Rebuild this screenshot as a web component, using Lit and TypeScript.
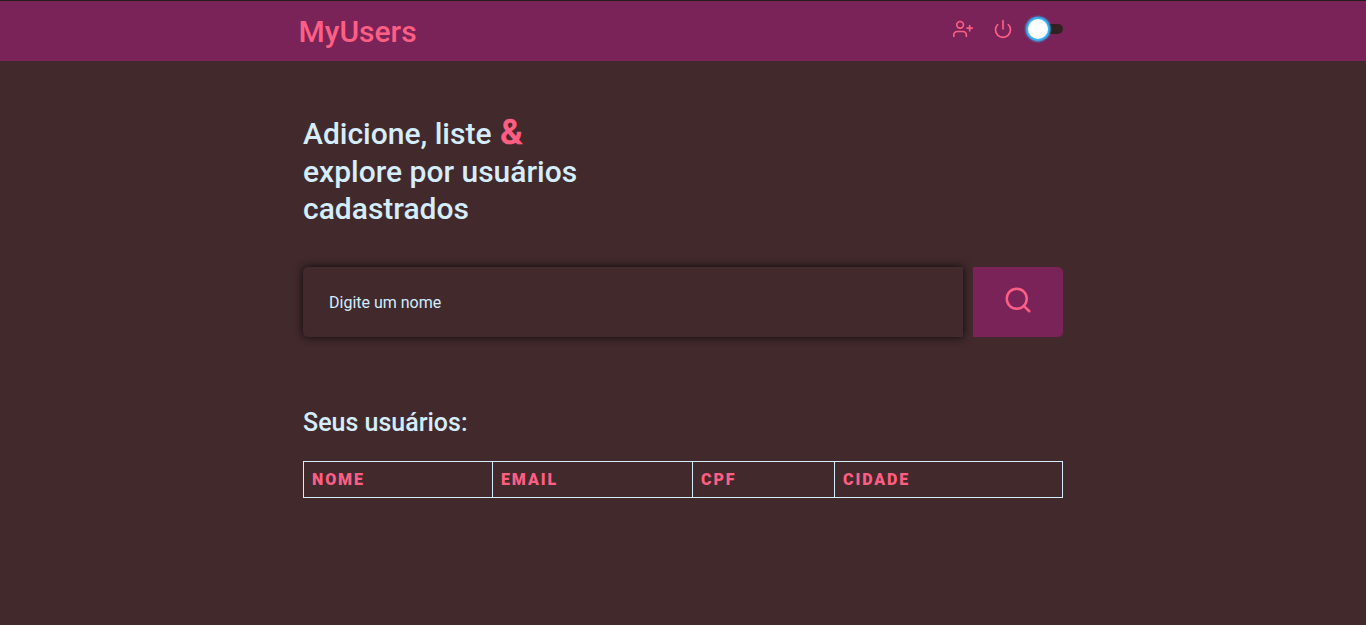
import { LitElement, html, css } from "lit";
import { customElement } from "lit/decorators.js";

@customElement("app-root")
export class AppRoot extends LitElement {
  static styles = css`
    :host {
      display: block;
      height: 100vh;
      box-sizing: border-box;
      overflow: hidden;
      border-top: 1px solid #241a20;
      background: #41292c;
      color: #d4edff;
      font-family: Roboto, sans-serif;
      font-size: 16px;
    }
    * {
      box-sizing: border-box;
    }
    header {
      height: 60px;
      background: #792359;
    }
    .bar {
      width: 769px;
      margin: 0 auto;
      padding-right: 4.5px;
      display: flex;
      justify-content: space-between;
    }
    .brand {
      padding-top: 1px;
      font-size: 30px;
      font-weight: 500;
      line-height: 60px;
      height: 60px;
      color: #ff5e84;
    }
    .actions {
      display: flex;
      height: 56px;
      align-items: center;
    }
    svg {
      display: block;
      fill: none;
      stroke: #ff5e84;
      stroke-width: 2;
      stroke-linecap: round;
      stroke-linejoin: round;
    }
    .small {
      width: 20px;
      height: 20px;
      margin-right: 20px;
    }
    .small + .small {
      margin-right: 15px;
    }
    .switch {
      width: 35px;
      height: 10px;
      border-radius: 5px;
      background: #322022;
      display: flex;
      align-items: center;
    }
    .knob {
      flex: none;
      width: 20px;
      height: 20px;
      border-radius: 50%;
      background: #fff;
      box-shadow: 0 0 2px 2.5px #33bbff;
    }
    main {
      width: 760px;
      margin: 0 auto;
      padding-top: 54px;
    }
    h1 {
      margin: 0;
      width: 300px;
      font-size: 30px;
      font-weight: 500;
      line-height: 37.5px;
    }
    .amp {
      margin-left: 1px;
      font-size: 35px;
      font-weight: 500;
      line-height: 30px;
      color: #ff5e84;
      -webkit-text-stroke: 0.6px #ff5e84;
    }
    form {
      display: flex;
      gap: 10px;
      margin: 39px 0 0;
    }
    input {
      flex: 1;
      height: 70px;
      padding: 2px 26px 0;
      border: 0;
      border-radius: 5px 0 0 5px;
      background: #41292c;
      box-shadow: 0 0 8px #000000cc;
      color: #d4edff;
      font: 400 16px Roboto, sans-serif;
    }
    input::placeholder {
      color: #d4edff;
      opacity: 1;
    }
    button {
      width: 90px;
      height: 70px;
      padding: 0 0 4px;
      border: 0;
      border-radius: 0 5px 5px 0;
      background: #792359;
      display: flex;
      align-items: center;
      justify-content: center;
    }
    .search {
      width: 30px;
      height: 30px;
    }
    h2 {
      margin: 71px 0 23px;
      font-size: 25px;
      font-weight: 500;
      line-height: 30px;
    }
    table {
      width: 760px;
      border-collapse: collapse;
      table-layout: fixed;
    }
    th {
      height: 36px;
      padding: 0 8px;
      border: 1px solid #d4edff;
      text-align: left;
      font-size: 16px;
      font-weight: 900;
      letter-spacing: 1.9px;
      color: #ff5e84;
    }
    .nome { width: 189px; }
    .email { width: 200px; }
    .cpf { width: 142px; }
  `;

  render() {
    return html`
      <header>
        <div class="bar">
          <div class="brand">MyUsers</div>
          <div class="actions">
            <svg class="small" viewBox="0 0 24 24">
              <path d="M16 21v-2a4 4 0 0 0-4-4H5a4 4 0 0 0-4 4v2" />
              <circle cx="8.5" cy="7" r="4" />
              <path d="M20 8v6M23 11h-6" />
            </svg>
            <svg class="small" viewBox="0 0 24 24">
              <path d="M18.36 6.64a9 9 0 1 1-12.73 0M12 2v10" />
            </svg>
            <div class="switch"><div class="knob"></div></div>
          </div>
        </div>
      </header>
      <main>
        <h1>Adicione, liste <span class="amp">&amp;</span><br />explore por usuários cadastrados</h1>
        <form>
          <input placeholder="Digite um nome" />
          <button type="button" aria-label="Buscar">
            <svg class="search" viewBox="0 0 24 24">
              <circle cx="11" cy="11" r="8" />
              <path d="M21 21l-4.35-4.35" />
            </svg>
          </button>
        </form>
        <h2>Seus usuários:</h2>
        <table>
          <tr>
            <th class="nome">NOME</th>
            <th class="email">EMAIL</th>
            <th class="cpf">CPF</th>
            <th>CIDADE</th>
          </tr>
        </table>
      </main>
    `;
  }
}
